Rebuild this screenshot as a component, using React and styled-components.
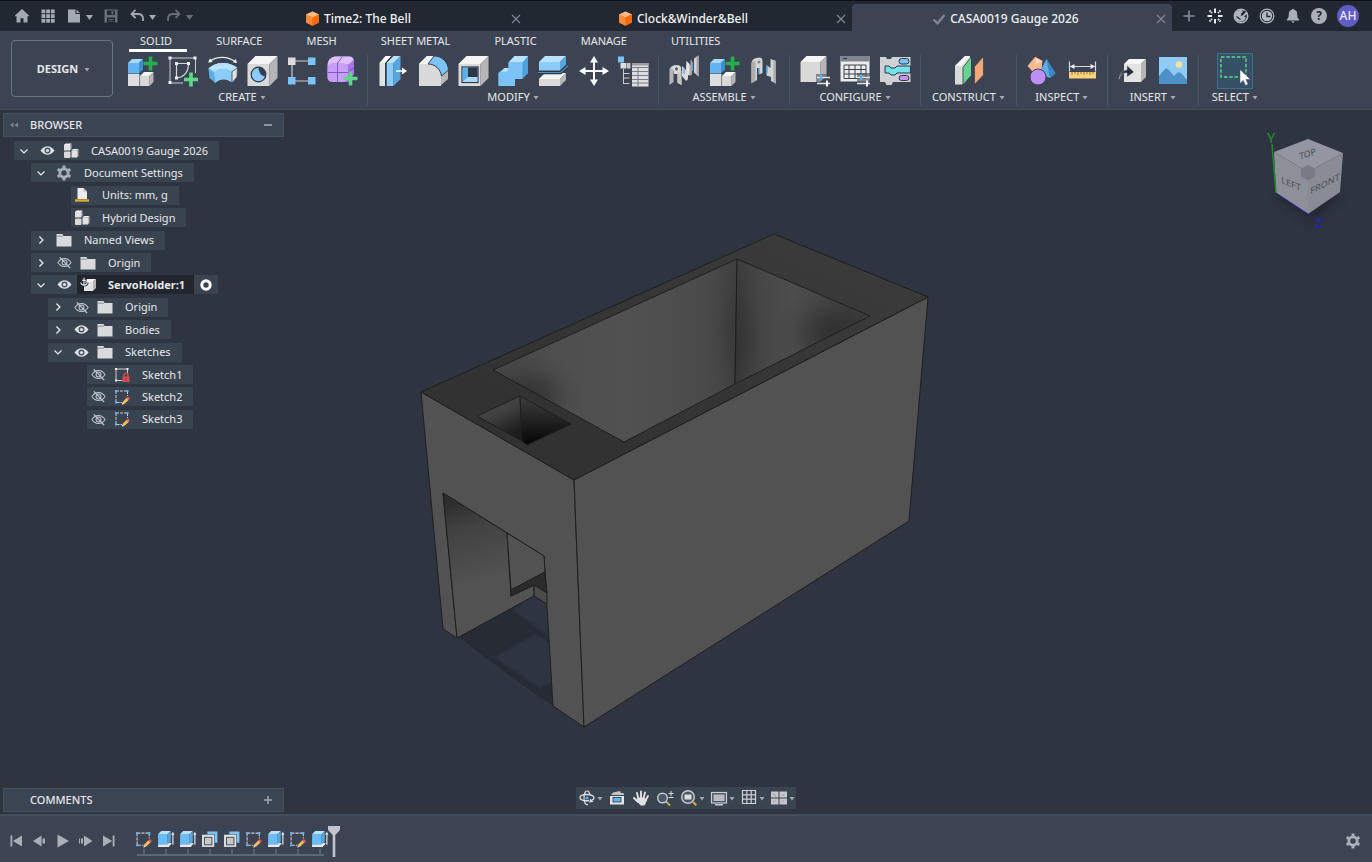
import React from 'react';
import styled, { createGlobalStyle, css } from 'styled-components';

const GlobalStyle = createGlobalStyle`
    *, *::before, *::after {
        box-sizing: border-box;
    }

    body {
        margin: 0;
        background: #2e3440;
        color: #e6e8ec;
        font-family: "Noto Sans", "Open Sans", sans-serif;
        font-size: 11px;
        line-height: 16px;
    }

    button {
        font: inherit;
        color: inherit;
        background: none;
        border: none;
        padding: 0;
        cursor: pointer;
    }

    ul {
        list-style: none;
        margin: 0;
        padding: 0;
    }

    svg {
        display: block;
        flex: none;
    }
`;

const Page = styled.div`
    display: flex;
    flex-direction: column;
    min-height: 100vh;
`;

/* ---- title bar ---- */

const TitleBar = styled.header`
    display: flex;
    height: 31px;
    background: #222831;
    border-top: 1px solid #0c0e13;
    color: #a4a9b3;
`;

const QuickAccess = styled.div`
    flex: 0 0 202px;
    display: flex;
    align-items: center;
    gap: 6px;
    padding-left: 12px;
`;

const TitleButton = styled.button`
    display: flex;
    align-items: center;
    opacity: ${props => (props.$dim ? 0.55 : 1)};
`;

const FileTabs = styled.nav`
    flex: 1;
    display: flex;
    padding-top: 3px;
`;

const FileTab = styled.div`
    flex: ${props => (props.$active ? 64 : 65)};
    display: flex;
    align-items: center;
    padding: 2px 3px 0 6px;
    border-radius: 4px 4px 0 0;
    background: ${props => (props.$active ? '#3c4453' : 'transparent')};
`;

const FileName = styled.a`
    flex: 1;
    display: flex;
    align-items: center;
    justify-content: center;
    gap: 4px;
    color: #f0f1f4;
    font-size: 12px;
    font-weight: 500;
    text-decoration: none;
    white-space: nowrap;
`;

const AccountBar = styled.div`
    flex: 0 0 200px;
    display: flex;
    align-items: center;
    gap: 6px;
    padding-left: 7px;
`;

const Avatar = styled.button`
    width: 22px;
    height: 22px;
    margin-left: 2px;
    border-radius: 50%;
    background: #5f5cc4;
    color: #e9e9fb;
    font-size: 12px;
    font-weight: 500;
`;

/* ---- ribbon ---- */

const Ribbon = styled.section`
    display: flex;
    background: #3c4453;
    padding-bottom: 4px;
    border-bottom: 1px solid #434c5a;
`;

const WorkspacePicker = styled.button`
    display: flex;
    align-items: center;
    justify-content: center;
    gap: 5px;
    width: 102px;
    height: 57px;
    margin: 9px 4px 0 11px;
    padding-left: 4px;
    border: 1px solid #6a7484;
    border-radius: 4px;
    font-weight: 700;
`;

const RibbonTabs = styled.div`
    display: flex;
    gap: 18px;
    padding-left: 12px;
`;

const RibbonTab = styled.button`
    height: 21px;
    padding: 1px 15px 0 11px;
    white-space: nowrap;
    border-bottom: 3px solid ${props => (props.$active ? '#fff' : 'transparent')};
`;

const RibbonGroups = styled.div`
    display: flex;
    padding-top: 3px;
`;

const RibbonGroup = styled.div`
    display: flex;
    flex-direction: column;
    align-items: center;
    gap: 2px;
    padding: 0 ${props => (props.$last ? 11 : 9)}px;
    border-right: 1px solid ${props => (props.$last ? 'transparent' : '#4d5666')};
`;

const ToolRow = styled.div`
    display: flex;
    align-items: center;
    gap: 8px;
    height: 32px;
`;

const ToolButton = styled.button`
    display: flex;
    align-items: center;
    justify-content: center;
    width: 32px;
    height: 32px;
    ${props => props.$active && css`
        width: 36px;
        height: 36px;
        background: #365066;
        border: 1px solid #3b7190;
    `}
`;

const GroupLabel = styled.button`
    display: flex;
    align-items: center;
    gap: 3px;
    padding: 0 2px;
    white-space: nowrap;
`;

/* ---- workspace ---- */

const Workspace = styled.main`
    flex: 1;
    display: grid;
    grid-template-columns: 284px 1fr 284px;
`;

const SidePanels = styled.aside`
    display: flex;
    flex-direction: column;
    justify-content: space-between;
    padding: 3px 0 2px 3px;
`;

const PanelHeader = styled.div`
    display: flex;
    align-items: center;
    height: 24px;
    padding: 0 7px 0 4px;
    background: #3b4452;
    border: 1px solid #465060;
`;

const PanelTitle = styled.h2`
    flex: 1;
    margin: 0;
    padding-left: 10px;
    font-size: 11px;
    font-weight: 500;
`;

const PanelButton = styled.button`
    display: flex;
    align-items: center;
    justify-content: center;
    width: 12px;
    height: 16px;
    margin-right: ${props => (props.$right ? '2px' : 0)};
    color: #a4abb7;
`;

const Tree = styled.ul`
    display: flex;
    flex-direction: column;
    justify-content: space-between;
    align-items: flex-start;
    height: 288px;
    margin: 4px 0 0 11px;
`;

const TreeRow = styled.li`
    display: flex;
    align-items: center;
    gap: 2px;
    height: 19px;
    margin-left: ${props => props.$indent}px;
    background: #3a4350;
`;

const TreeSlot = styled.button`
    display: flex;
    align-items: center;
    justify-content: center;
    width: ${props => (props.$narrow ? 20 : 22)}px;
    height: 19px;
`;

const TreeItem = styled.span`
    display: flex;
    align-items: center;
    gap: 2px;
    height: 19px;
    padding-right: 11px;
    ${props => props.$selected && css`
        padding-right: 9px;
        background: #20252e;
        font-weight: 700;
    `}
`;

const TreeIcon = styled.span`
    display: flex;
    justify-content: center;
    width: 22px;
`;

const TreeLabel = styled.span`
    padding-left: 7px;
    white-space: nowrap;
`;

const Stage = styled.div`
    display: flex;
    flex-direction: column;
    align-items: center;
    min-width: 0;
    padding-bottom: 5px;
`;

const ModelView = styled.svg`
    flex: 1;
    width: 100%;
    min-height: 0;
`;

const NavBar = styled.div`
    display: flex;
    align-items: center;
    gap: 4px;
    height: 22px;
    padding: 0 1px;
    background: #3a4350;
`;

const NavButton = styled.button`
    display: flex;
    align-items: center;
`;

const NavCorner = styled.div`
    display: flex;
    justify-content: flex-end;
    padding: 15px 12px;
`;

/* ---- timeline ---- */

const Timeline = styled.footer`
    display: flex;
    align-items: flex-start;
    height: 48px;
    padding-left: 6px;
    background: #3c4453;
    border-top: 2px solid #434d5b;
    color: #a9aeb8;
`;

const Playback = styled.div`
    display: flex;
    gap: 3px;
    padding: 15px 13px 0 0;
`;

const PlayButton = styled.button`
    display: flex;
    align-items: center;
    justify-content: center;
    width: 20px;
    height: 20px;
`;

const FeatureList = styled.ul`
    display: flex;
    margin-top: 15px;
    padding: 0 1px 2px 2px;
    background: linear-gradient(#5c6777, #5c6777) 6px 100% / calc(100% - 14px) 2px no-repeat;
`;

const Feature = styled.li`
    display: flex;
    flex-direction: column;
    align-items: center;
    width: 22px;

    &::after {
        content: '';
        width: 2px;
        height: 5px;
        background: #566170;
    }
`;

const TimelineMarker = styled.div`
    margin-left: -4px;
    padding-top: 10px;
`;

const SettingsButton = styled.button`
    margin: 17px 11px 0 auto;
`;

/* ---- small glyphs ---- */

const Caret = ({ width = 8, size = 5, color = '#a4a9b3' }) => (
    <svg width={width} height="10" viewBox={`0 0 ${width} 10`} aria-hidden="true">
        <path d={`M${width / 2 - size / 2} 4h${size}l${-size / 2} ${size * 0.7}z`} fill={color} />
    </svg>
);

const Glyph = ({ size = 20, box = 20, children }) => (
    <svg width={size} height={size} viewBox={`0 0 ${box} ${box}`} fill="none" aria-hidden="true">
        {children}
    </svg>
);

const CloseIcon = () => (
    <Glyph size={16} box={16}>
        <path d="M4 4l8 8M12 4l-8 8" stroke="#7f8692" strokeWidth="1.2" />
    </Glyph>
);

const OrangeCube = () => (
    <Glyph size={15} box={15}>
        <path d="M7.5.5l6.5 3v8l-6.5 3.3-6.5-3.3v-8z" fill="#ff7a1c" />
        <path d="M7.5.5l6.5 3-6.5 3-6.5-3z" fill="#ffb98a" />
        <path d="M1 3.5l6.5 3v8.300l-6.500-3.300z" fill="#fb8a3a" />
        <path d="M14 3.5l-6.5 3v8.300l6.500-3.300z" fill="#f26a0c" />
    </Glyph>
);

const CheckIcon = () => (
    <Glyph size={14} box={14}>
        <path d="M1.5 7.5l4 3.8L12.500 3" stroke="#7f8692" strokeWidth="2.4" />
    </Glyph>
);

const titleIcons = {
    home: (
        <path d="M10 3l7 6.500v.8h-1.500V16.500h-4v-4.200h-3v4.200h-4v-6.200H3v-.8z" fill="currentColor" />
    ),
    apps: [3.5, 8.2, 12.9].map(y => [3.5, 8.2, 12.9].map(x => (
        <rect key={`${x}-${y}`} x={x} y={y} width="3.8" height="3.8" fill="currentColor" />
    ))),
    file: <path d="M4 3.500h7.500v4.500h4.500v8.500H4zM12.500 3.500l3.500 3.500h-3.500z" fill="currentColor" />,
    save: (
        <path fillRule="evenodd" fill="currentColor" d="M3.500 3.500h13v13h-13zM6 4.500v4.500h8v-4.500zM6 11.500v5h8v-5zM7.500 13h5v.8h-5zM7.500 14.800h5v.8h-5zM10.500 5.200h1.800v3h-1.800z" />
    ),
    undo: (
        <g stroke="currentColor" strokeWidth="1.8">
            <path d="M5 8h6c3 0 5 1.800 5 5v2" />
            <path d="M8.500 3.800L4.500 8l4 4" />
        </g>
    ),
    redo: (
        <g stroke="currentColor" strokeWidth="1.8">
            <path d="M15 8H9c-3 0-5 1.800-5 5v2" />
            <path d="M11.500 3.800L15.500 8l-4 4" />
        </g>
    ),
    plus: <path d="M10 4.500v11M4.500 10h11" stroke="#858c98" strokeWidth="1.6" />,
    spark: (
        <g stroke="#eceef1" strokeWidth="2">
            <path d="M10 2.500v4.500M10 13v4.500M2.500 10h4.500M13 10h4.500" />
            <path d="M4.500 4.500l2.500 2.500M13 13l2.500 2.500M15.500 4.500l-2.500 2.500M4.500 15.500l2.500-2.500" strokeDasharray="1.600 .700" />
        </g>
    ),
    extensions: (
        <g>
            <circle cx="10" cy="10" r="6.7" stroke="#b0b4bd" strokeWidth="1.6" />
            <path d="M4 7c1.500-2.500 4-3.500 7-3l1 2-2 1.500 1.500 2 4-4 1 2-3.500 3 2 1-1.500 2.500c-2 2-5 2-7 1-2-1.500-3.500-4.500-2.500-8z" fill="#b0b4bd" />
            <path d="M10 9.500l4.500-4.500M5.500 10.500l4 3" stroke="#222831" strokeWidth="1.3" />
        </g>
    ),
    jobs: (
        <g>
            <circle cx="10" cy="10" r="6.8" stroke="#b4b8c0" strokeWidth="1.2" />
            <circle cx="10" cy="10" r="5.2" fill="#b4b8c0" />
            <path d="M10 6.500V10.500h3.500" stroke="#222831" strokeWidth="1.3" />
        </g>
    ),
    bell: (
        <path d="M10 2.500l1.200 1.300c2 .6 3 2 3 4.200 0 3 .5 4.200 2 5.500v1H3.800v-1c1.500-1.300 2-2.500 2-5.500 0-2.200 1-3.600 3-4.200zM8.300 15.300h3.400L10 17.300z" fill="#a9aeb8" />
    ),
};

const HelpMark = styled.span`
    display: flex;
    align-items: center;
    justify-content: center;
    width: 16px;
    height: 16px;
    margin: 0 2px;
    border-radius: 50%;
    background: #a9aeb8;
    color: #222831;
    font-size: 12px;
    font-weight: 700;
`;

/* ---- ribbon drawings, 32 x 32 ---- */

const Plus = ({ x, y, r = 7, color = '#27ae4f' }) => (
    <path d={`M${x} ${y - r}v${r * 2}M${x - r} ${y}h${r * 2}`} stroke={color} strokeWidth="3.6" />
);

const Box = ({ x, y, w, h, d, front = '#d9d9d9', top = '#f5f5f5', side = '#b5b5b5' }) => (
    <g>
        <path d={`M${x} ${y + d}h${w}v${h}h${-w}z`} fill={front} />
        <path d={`M${x} ${y + d}l${d} ${-d}h${w}l${-d} ${d}z`} fill={top} />
        <path d={`M${x + w} ${y + d}l${d} ${-d}v${h}l${-d} ${d}z`} fill={side} />
    </g>
);

const blue = { front: '#63b4f2', top: '#a5d8fb', side: '#3d8fd0' };
const paleBlue = { front: '#8cccf8', top: '#b9e2fc', side: '#58a6de' };

const Sliders = ({ x, y }) => (
    <g strokeWidth="1.4">
        <path d={`M${x} ${y}h13M${x} ${y + 6}h13`} stroke="#e3e3e3" />
        <path d={`M${x + 4} ${y - 3}v6`} stroke="#58b4f0" strokeWidth="2" />
        <path d={`M${x + 10} ${y + 3}v6`} stroke="#f4f4f4" strokeWidth="2" />
    </g>
);

const tools = {
    newComponent: (
        <g>
            <Box x={14} y={17} w={9.5} h={10} d={4} />
            <path d="M2 19h11.500v12H2z" fill="#dedede" />
            <path d="M13.700 20v11" stroke="#7d838d" strokeWidth=".6" />
            <Box x={2} y={4} w={11} h={10.5} d={4} {...blue} />
            <Plus x={24.5} y={8.5} />
        </g>
    ),
    sketch: (
        <g>
            <path d="M4 3v25h13M4 3h25.500v15" stroke="#c9ccd2" strokeWidth="1" />
            <path d="M10.500 8.500v14.500M10.500 8.500h12c0 9-5 14-12 14.500" stroke="#d6d8dc" strokeWidth="1.2" />
            {[[4, 3], [29, 3], [4, 27.5], [10.5, 8.5], [22.5, 8.5], [10.5, 23]].map(([x, y]) => (
                <rect key={`${x}-${y}`} x={x - 1.5} y={y - 1.5} width="3" height="3" fill="#eceef1" />
            ))}
            <Plus x={25} y={24.5} color="#5fd68b" />
        </g>
    ),
    revolve: (
        <g>
            <path d="M2.500 13.500C6 10 11 8 17 8s11 2 14.500 5l-6 14.500c-5-4-11-4-16.500.5z" fill="#8cccf8" />
            <path d="M2.500 13.500C6 10 11 8 17 8s11 2 14.500 5l-5 3.500C21 12.500 13 12.500 8 17z" fill="#b9e2fc" />
            <path d="M2.500 13.500L8 17l1.500 11L3.500 23z" fill="#5eaee6" />
            <path d="M26 16.500l5.500-3.500-.5 9-5 6z" fill="#e2e2e2" stroke="#3a4350" strokeWidth=".8" />
            <path d="M3.500 6.500C11 1 22 1 29.500 7" stroke="#e6e8ec" strokeWidth="1.3" />
            <path d="M2 7.500l2-4 2.500 3.500zM31 8l-4-.8 2.700-3.200z" fill="#fff" />
        </g>
    ),
    hole: (
        <g>
            <Box x={1.5} y={1} w={22} h={22} d={8} />
            <circle cx="12.5" cy="19.5" r="7.3" fill="#8cccf8" stroke="#2c3645" strokeWidth="1.2" />
            <path d="M12.500 12.200a7.300 7.300 0 0 1 7 9.300c-4-.5-7-3.500-7-9.300z" fill="#33404f" />
        </g>
    ),
    pattern: (
        <g>
            <path d="M6 6h20M6 6v20M6 26h20" stroke="#c7cad1" strokeWidth="1.2" />
            <rect x="2" y="2.5" width="7.5" height="7.5" fill="#dcdcdc" />
            <rect x="22" y="2.5" width="7.5" height="7.5" fill="#7cc4f7" />
            <rect x="2" y="22" width="7.5" height="7.5" fill="#7cc4f7" />
            <rect x="22" y="22" width="7.5" height="7.5" fill="#7cc4f7" />
        </g>
    ),
    form: (
        <g>
            <path d="M9 1.500h14q5 0 5 5v13l-6 7.500H6q-4.500 0-4.500-5V9q1-7 7.500-7.500z" fill="#a873e8" />
            <path d="M9 1.500h14q4 0 4.500 3.500l-5 4.500H5q-3 0-3.500 2 .5-9 7.500-10z" fill="#dcc1fb" />
            <rect x="1.5" y="8" width="20.5" height="19" rx="5" fill="#c79ff6" />
            <path d="M11.500 8v19M1.500 17.500h20.500l6-5M11.500 8l5-6.500" stroke="#7d4fc0" strokeWidth=".9" />
            <Plus x={24.5} y={23.5} color="#5fd68b" />
        </g>
    ),
    pressPull: (
        <g>
            <path d="M2.500 8l6-7H14L8 8v23H2.500z" fill="#e2e2e2" />
            <path d="M2.500 8L9 1h5L8 8z" fill="#fff" />
            <Box x={9.5} y={1} w={7} h={23} d={7} {...paleBlue} />
            <path d="M9 31V8l6-7" stroke="#2c3645" strokeWidth="1" />
            <path d="M19 16h7" stroke="#fff" strokeWidth="1.5" />
            <path d="M25 12.500l5 3.500-5 3.500z" fill="#fff" />
        </g>
    ),
    fillet: (
        <g>
            <path d="M2 9L10 1h6c8 0 15 7 15 15v8l-8 7H2z" fill="#b9b9b9" />
            <path d="M2 9L10 1h7L12 9z" fill="#f5f5f5" />
            <path d="M2 9h8c8 0 14 6 14 14v8H2z" fill="#dadada" />
            <path d="M11 9l6-8c8 0 14 6 14.500 14L24.500 21C23.500 14 18 9 11 9z" fill="#7cc4f7" stroke="#2c3645" strokeWidth=".9" />
        </g>
    ),
    shell: (
        <g>
            <Box x={1.5} y={1} w={22} h={22} d={8} />
            <rect x="5" y="12" width="16" height="15.5" fill="#8cccf8" stroke="#2c3645" strokeWidth="1.2" />
            <path d="M5.600 12.600h5.400v10l-5.400 4.900z" fill="#5eaee6" />
            <path d="M11 12.600h9.400v9.600H11z" fill="#2c3645" />
            <path d="M5.600 27l5.400-5h9.400v5z" fill="#a5d8fb" />
        </g>
    ),
    combine: (
        <g>
            <path d="M11.500 7.500l6-6.500H31v17.500L25 24H18v2l-5 5H1.500V18.500L7.500 13h4z" fill="#4f9fdb" />
            <path d="M11.500 7.500l6-6.500H31l-5.500 6.500zM1.500 18.500L7.500 13h4v5.500z" fill="#b9e2fc" />
            <path d="M11.500 7.500h14V24H18v7H1.500V18.500q0-2 2-2h6q2 0 2-2z" fill="#7cc4f7" />
        </g>
    ),
    split: (
        <g>
            <Box x={2} y={18} w={21} h={7} d={6} />
            <path d="M1 18.500h23l7-7" stroke="#2c3645" strokeWidth="1.5" />
            <path d="M1 16.500h22.500L31 9.500v2l-7 6.500H1z" fill="#4d93c8" />
            <path d="M1 16.500h22.500L31 9.500" stroke="#2c3645" strokeWidth="1" />
            <Box x={2} y={1} w={21} h={8.5} d={6} {...paleBlue} />
        </g>
    ),
    move: (
        <g stroke="#fff" strokeWidth="2">
            <path d="M17 5v22M6 16h22" />
            <path d="M17 1l4 6.500h-8zM17 31l4-6.500h-8zM2 16l6.500-4v8zM32 16l-6.500-4v8z" fill="#fff" strokeWidth="0" />
        </g>
    ),
    parameters: (
        <g>
            <rect x="1" y="1.5" width="6" height="6" fill="#7cc4f7" />
            <rect x="3.5" y="8" width="5.5" height="5.5" fill="#dcdcdc" />
            <rect x="9.5" y="8" width="4" height="5.5" fill="#c4c4c4" />
            <path d="M6.500 14v15M6.500 18.500h6M6.500 23h6M6.500 28.500h6" stroke="#c7cad1" strokeWidth="1" />
            <rect x="15" y="8" width="16.5" height="23.5" fill="#dedede" />
            <path d="M15 12.500h16.500M15 16.500h16.500M15 20.500h16.500M15 24.500h16.500M15 28h16.500M21 12v19.500" stroke="#6b7380" strokeWidth=".9" />
            <rect x="15" y="8" width="16.5" height="2.5" fill="#9a9a9a" />
        </g>
    ),
    joint: (
        <g>
            <path d="M1.500 15q0-4 6-5v4q-2 1-2 4v9l-4 3z" fill="#b5b5b5" />
            <path d="M3 13q2-3 6.500-3 3.500.5 3.500 3l.500 17-4-2.500V19H6V16q0-2-3-3z" fill="#d9d9d9" />
            <ellipse cx="8.5" cy="14" rx="1.5" ry="1.8" fill="#5a6472" />
            <path d="M9.500 19l4-3v14l-4-2z" fill="#c4c4c4" />
            <path d="M14 11l4 4v-5l2 1v13l-2 2-4-5z" fill="#dcdcdc" />
            <path d="M18.500 6l4 4.500V5l1.500.500v14l-1.500 1-4-3z" fill="#a9a9a9" />
            <path d="M18.500 6l3 3v12l-3-3z" fill="#e4e4e4" />
            <path d="M26 3.500l4.500-3v21l-4.500-4z" fill="#d2d2d2" />
            <path d="M28.500 1.800l2-1.300v21l-2-1.700z" fill="#a9a9a9" />
            <path d="M16 13v6M24.500 7v9" stroke="#4fa6e6" strokeWidth="1.3" />
        </g>
    ),
    asBuilt: (
        <g>
            <path d="M3.500 8q.5-4 4.500-5l4-.5q2.500.5 2.500 3V18l-3.500 1.500V13H9v12l-5.500 3z" fill="#d4d4d4" />
            <path d="M3.500 8q1-2 4-2V25.500l-4 2.500z" fill="#adadad" />
            <circle cx="11" cy="7" r="1.5" fill="#7c8591" />
            <path d="M18.500 10l4 3V4l5.500 2v22.500l-5-2.500v-4l-4.500-1.500z" fill="#d4d4d4" />
            <path d="M25.500 5l2.500 1v22.500l-2.500-1.200z" fill="#a9a9a9" />
            <path d="M11 13v6M19 11v7" stroke="#4fa6e6" strokeWidth="1.5" />
        </g>
    ),
    configure: (
        <g>
            <Box x={1.5} y={1} w={20} h={20} d={6} />
            <rect x="17" y="19" width="15" height="12" fill="#3c4453" opacity=".55" />
            <Sliders x={18} y={22.5} />
        </g>
    ),
    configTable: (
        <g>
            <rect x="1.5" y="1" width="29" height="25.5" fill="#ececec" />
            <rect x="1.5" y="1" width="29" height="5.5" fill="#7e858f" />
            <path d="M4 3.500h4" stroke="#3a4350" strokeWidth="1.2" />
            <path d="M5 10h22v13.500H5zM5 14.500h22M5 19h22M10 10v13.500M16 10v13.500M22 10v13.500" stroke="#3a4350" strokeWidth="1" />
            <rect x="18" y="18" width="14" height="13" fill="#3c4453" opacity=".6" />
            <Sliders x={18} y={22.5} />
        </g>
    ),
    configRule: (
        <g>
            <path d="M1 2h6l1 2h4l1-2h18.500v25H14l-1.500 3h-5L6 27H1z" fill="#cfd1d4" />
            <rect x="20" y="3.5" width="10" height="5.5" rx="2.7" fill="#7cc4f7" stroke="#2c3645" strokeWidth="1" />
            <path d="M31.500 11H18l-2 2h-4l-2-2H6v7h4l2 2h4l2-2h13.500z" fill="#72e2ec" stroke="#2c3645" strokeWidth="1" />
            <rect x="20" y="20.5" width="10" height="5" rx="2.5" fill="#c39af6" stroke="#2c3645" strokeWidth="1" />
        </g>
    ),
    plane: (
        <g>
            <path d="M3 11L13 1h5v18L10.500 29.500H3z" fill="#dadada" />
            <path d="M3 11L13 1h5l-8 10z" fill="#f5f5f5" />
            <path d="M11 12.500L19.500 1.500v19L11 30z" fill="#68d391" stroke="#2c3645" strokeWidth=".8" />
            <path d="M22.500 11.500L31.500 1.500v18.500L22.500 29.500z" fill="#f5a878" stroke="#3a4350" strokeWidth=".8" />
        </g>
    ),
    measureShapes: (
        <g>
            <path d="M9 2l7.500 4-1 8.500L7 17l-5.500-6z" fill="#f7b98f" />
            <path d="M9 2l7.500 4-7 3.500z" fill="#fbd5ba" />
            <path d="M20.500 4l9 14.500-5.500 4.500L13 18.500z" fill="#5eaee6" />
            <path d="M20.500 4l9 14.500-5.500 4.500z" fill="#3a86c4" />
            <circle cx="12" cy="22" r="8" fill="#bd8ff3" stroke="#3c4453" strokeWidth="1" />
        </g>
    ),
    ruler: (
        <g>
            <path d="M3.500 6.500v10M29.500 6.500v10M4 11.500h25" stroke="#d6d8dc" strokeWidth="1.2" />
            <path d="M4 11.500l4.500-2.500v5zM29 11.500L24.500 9v5z" fill="#eceef1" />
            <rect x="3" y="17" width="27" height="6.5" fill="#f8d27e" />
            <path d="M6 17v3M9 17v2M12 17v3M15 17v2M18 17v3M21 17v2M24 17v3M27 17v2" stroke="#8a6a20" strokeWidth=".9" />
        </g>
    ),
    insertDerive: (
        <g>
            <Box x={7} y={4} w={17} h={18} d={5} front="#e4e4e4" />
            <path d="M2 24c1-7 5-9 8-9v-4.500l7 6.500-7 5v-4c-4 0-6 1-8 6z" fill="#2b3038" stroke="#c7cad1" strokeWidth=".5" />
        </g>
    ),
    picture: (
        <g>
            <rect x="2" y="2" width="28" height="27" fill="#8fcbf5" />
            <circle cx="22" cy="9.5" r="3.3" fill="#f6e2a0" />
            <path d="M2 21l6-7q2-1.500 4 1l5 6 3-3q2-1.500 4 0l6 7v4H2z" fill="#4b93c6" />
        </g>
    ),
    select: (
        <g>
            <rect x="2" y="2" width="25" height="20" stroke="#5fd68b" strokeWidth="1.4" strokeDasharray="3.5 1.8" />
            <path d="M21 14.500v14l3.300-3 2.200 5 2.700-1.200-2.200-4.800h4.500z" fill="#fff" stroke="#3c4453" strokeWidth=".5" />
        </g>
    ),
};

/* ---- browser tree drawings, 16 x 16 ---- */

const treeIcons = {
    open: <path d="M4 6.200l4 4 4-4" stroke="#e6e8ec" strokeWidth="1.5" />,
    closed: <path d="M6.200 4l4 4-4 4" stroke="#e6e8ec" strokeWidth="1.5" />,
    visible: (
        <g>
            <path d="M.5 8C3 4.500 5.500 3.500 8 3.500s5 1 7.500 4.500C13 11.500 10.500 12.500 8 12.500S3 11.500.5 8z" fill="#dfe1e5" />
            <circle cx="8" cy="8" r="3.2" fill="#4a5362" />
            <circle cx="8" cy="8" r="1.7" fill="#dfe1e5" />
        </g>
    ),
    hidden: (
        <g stroke="#c3c7ce" strokeWidth="1.1">
            <path d="M1 8c2-3.200 4.500-4.300 7-4.300S13 4.800 15 8c-2 3.200-4.500 4.300-7 4.300S3 11.200 1 8z" />
            <circle cx="8" cy="8" r="2.6" />
            <path d="M3 2.500l11 11.500" strokeWidth="1.4" />
        </g>
    ),
    component: (
        <g>
            <Box x={1} y={0.5} w={6} h={5.5} d={1.5} front="#e2e2e2" />
            <Box x={8.5} y={6} w={5.5} h={7} d={1.5} front="#e2e2e2" />
            <rect x="1" y="8.5" width="6.5" height="6.5" rx="1" fill="#dadada" />
        </g>
    ),
    gear: (
        <g stroke="#a9afb9">
            <circle cx="8" cy="8" r="4.2" strokeWidth="2.8" />
            <path d="M8 .6v3M8 12.400v3M1.600 4.300l2.600 1.500M11.800 10.200l2.600 1.500M1.600 11.700l2.600-1.500M11.800 5.800l2.600-1.500" strokeWidth="3" />
        </g>
    ),
    units: (
        <g>
            <path d="M3.500 1h6l3.500 3.500V12H3.500z" fill="#e9ebee" />
            <path d="M9.500 1v3.500H13z" fill="#b5b9c0" />
            <path d="M1 13.500h14" stroke="#e0ab35" strokeWidth="2.4" />
        </g>
    ),
    folder: (
        <g>
            <path d="M.5 2h6l1 2h8v10.500H.5z" fill="#d9dadc" />
            <path d="M.5 4.200h6.500" stroke="#6d7480" strokeWidth=".7" />
        </g>
    ),
    anchoredBody: (
        <g>
            <Box x={4} y={2} w={9} h={9} d={3} front="#e2e2e2" />
            <path d="M4 .8v7M1.500 3.200h5M.8 5.500c.5 3.500 6 3.500 6.500 0" stroke="#20252e" strokeWidth="2.6" />
            <path d="M4 .8v7M2 3.200h4M.8 5.500c.5 3.500 6 3.500 6.500 0" stroke="#eceef1" strokeWidth="1.1" />
        </g>
    ),
    lockedSketch: (
        <g>
            <path d="M2 2h11.500M2 2v11.500h6M13.500 2v5" stroke="#c9ccd2" strokeWidth="1" />
            <path d="M1 1h2v2H1zM12.500 1h2v2h-2zM1 12.500h2v2H1z" fill="#eceef1" />
            <rect x="8.5" y="9.5" width="7" height="5.5" fill="#dd4b55" />
            <path d="M10 9.500V8c0-2.300 4-2.300 4 0v1.500" stroke="#dd4b55" strokeWidth="1.3" />
            <path d="M12 11v2.500" stroke="#7a2630" strokeWidth="1" />
        </g>
    ),
    editSketch: (
        <g>
            <path d="M2 2h11.500M2 2v11.500h6M13.500 2v5" stroke="#c9ccd2" strokeWidth="1" strokeDasharray="3 1" />
            <path d="M1 1h2v2H1zM12.500 1h2v2h-2zM1 12.500h2v2H1z" fill="#5bb4f5" />
            <path d="M8 15.500l1-3 4-4 2 2-4 4z" fill="#f5c158" />
            <path d="M12.500 9l1.500-1.500 2 2-1.500 1.500z" fill="#e8575a" />
            <path d="M8 15.500l.6-1.800 1.200 1.200z" fill="#fff" />
        </g>
    ),
    extrude: (
        <g>
            <path d="M1 13l2.500-2H12l2 .5-3 3.500H1z" fill="#e8e8e8" />
            <Box x={1} y={0} w={9} h={10} d={3} {...paleBlue} front="#6bbcf6" />
            <path d="M15 3v10" stroke="#e6e8ec" strokeWidth="1.1" />
            <path d="M13.300 3.500L15 .8l1.500 2.700z" fill="#e6e8ec" />
        </g>
    ),
    faceShell: (
        <g>
            <path d="M6 .5h9.500V11H13V3H6z" fill="#7cc4f7" />
            <rect x="1" y="3.5" width="11.5" height="11.5" fill="#e2e2e2" />
            <rect x="3.3" y="6" width="7" height="7" fill="#c8c8c8" stroke="#4a5362" strokeWidth="1" />
        </g>
    ),
};

/* ---- navigation bar drawings, 20 x 20 ---- */

const navIcons = {
    orbit: (
        <g>
            <path d="M12 12.500c-4 .8-9-.5-9-2.800S6.500 6.500 10 6.500s7 1.300 7 3.300c0 1-.8 1.800-2 2.300" stroke="#dcdee2" strokeWidth="1.3" />
            <path d="M11 16.500c-2 1-4-2-4-6.500s1.500-7 3-7 2.500 1.500 3 4" stroke="#dcdee2" strokeWidth="1.2" />
            <path d="M13.500 10.500l3 3.500-4.500.500z" fill="#dcdee2" />
            <circle cx="10" cy="10" r="1.6" fill="#58b4f0" />
        </g>
    ),
    look: (
        <g>
            <path d="M3 8h14v8.500H3z" fill="#e6e6e6" />
            <path d="M4 7l2-2.500 7-1.500 1 2h2.500l.5 2z" fill="#c4c4c4" />
            <rect x="6" y="9.5" width="8" height="4.5" fill="#5bb4f5" stroke="#2c3645" strokeWidth=".8" />
        </g>
    ),
    pan: (
        <g stroke="#dfe1e5" strokeWidth="1.9" strokeLinecap="round">
            <path d="M7.500 11L6 5M10 10V3.500M12.500 10.500L14 4.500M14.500 12.500L17 8M7 14L3 10" />
            <path d="M6 11l1.500 3 2 3h4l2-5-3-2H7z" fill="#dfe1e5" strokeWidth="1" />
        </g>
    ),
    zoom: (
        <g>
            <circle cx="7.5" cy="10" r="4.8" stroke="#c9ccd2" strokeWidth="1.4" fill="#4b5666" />
            <path d="M11 13.500l1.500 1.500" stroke="#c9ccd2" strokeWidth="1.5" />
            <path d="M12.500 15l2.500 2.500" stroke="#e0ab35" strokeWidth="2" />
            <path d="M16 3v5M13.500 5.500h5M13.500 9.500h5" stroke="#dcdee2" strokeWidth="1" />
        </g>
    ),
    fit: (
        <g>
            <circle cx="9" cy="9" r="6.3" stroke="#c9ccd2" strokeWidth="1.4" fill="#4b5666" />
            <rect x="5.5" y="6.5" width="7" height="5" fill="#dcdee2" />
            <path d="M14 14l3.300 3.300" stroke="#e0ab35" strokeWidth="2" />
        </g>
    ),
    display: (
        <g>
            <rect x="2.5" y="4.5" width="15" height="10.5" fill="#4b5666" stroke="#c9ccd2" strokeWidth="1.2" />
            <rect x="4.5" y="6.5" width="11" height="6.5" fill="#b9bcc2" />
            <path d="M6 16.800h8" stroke="#c9ccd2" strokeWidth="1.5" />
        </g>
    ),
    grid: (
        <path d="M3.500 2.500h13v13h-13zM3.500 6.800h13M3.500 11.200h13M7.800 2.500v13M12.200 2.500v13" stroke="#cdd0d6" strokeWidth="1.2" />
    ),
    viewports: (
        <g fill="#c4c6ca">
            <path d="M2 3.500h7.500v6H2zM10.500 3.500H18v6h-7.500zM2 10.500h7.500v6H2zM10.500 10.500H18v6h-7.500z" />
            <path d="M4 6l3 2M12.500 6l3 2M4 14l3-2M12.500 14l3-2" stroke="#8f959f" strokeWidth=".8" />
        </g>
    ),
};

const playIcons = {
    first: <path d="M4.500 4.500h1.800v11H4.500zM16 4.500v11L6.800 10z" fill="currentColor" />,
    back: <path d="M4 10l8.500-5.500v11zM13.500 7.500h2.500v5h-2.500z" fill="currentColor" />,
    play: <path d="M5.500 3.500L17 10 5.500 16.500z" fill="currentColor" />,
    forward: <path d="M17.500 10L9 4.500v11zM4 7.500h1v5H4zM6 7.500h2v5H6z" fill="currentColor" />,
    last: <path d="M16.500 4.500h-1.800v11h1.800zM5 4.500v11L14.200 10z" fill="currentColor" />,
};

/* ---- data ---- */

const ribbonTabs = ['SOLID', 'SURFACE', 'MESH', 'SHEET METAL', 'PLASTIC', 'MANAGE', 'UTILITIES'];

const ribbonGroups = [
    { label: 'CREATE', tools: ['newComponent', 'sketch', 'revolve', 'hole', 'pattern', 'form'] },
    { label: 'MODIFY', tools: ['pressPull', 'fillet', 'shell', 'combine', 'split', 'move', 'parameters'] },
    { label: 'ASSEMBLE', tools: ['joint', 'newComponent', 'asBuilt'] },
    { label: 'CONFIGURE', tools: ['configure', 'configTable', 'configRule'] },
    { label: 'CONSTRUCT', tools: ['plane'] },
    { label: 'INSPECT', tools: ['measureShapes', 'ruler'] },
    { label: 'INSERT', tools: ['insertDerive', 'picture'] },
    { label: 'SELECT', tools: ['select'] },
];

const treeRows = [
    { label: 'CASA0019 Gauge 2026', indent: 0, toggle: 'open', eye: 'visible', icon: 'component' },
    { label: 'Document Settings', indent: 17, toggle: 'open', icon: 'gear' },
    { label: 'Units: mm, g', indent: 57, icon: 'units' },
    { label: 'Hybrid Design', indent: 57, icon: 'component' },
    { label: 'Named Views', indent: 17, toggle: 'closed', icon: 'folder' },
    { label: 'Origin', indent: 17, toggle: 'closed', eye: 'hidden', icon: 'folder' },
    { label: 'ServoHolder:1', indent: 17, toggle: 'open', eye: 'visible', icon: 'anchoredBody', selected: true },
    { label: 'Origin', indent: 34, toggle: 'closed', eye: 'hidden', icon: 'folder' },
    { label: 'Bodies', indent: 34, toggle: 'closed', eye: 'visible', icon: 'folder' },
    { label: 'Sketches', indent: 34, toggle: 'open', eye: 'visible', icon: 'folder' },
    { label: 'Sketch1', indent: 73, eye: 'hidden', icon: 'lockedSketch' },
    { label: 'Sketch2', indent: 73, eye: 'hidden', icon: 'editSketch' },
    { label: 'Sketch3', indent: 73, eye: 'hidden', icon: 'editSketch' },
];

const navItems = [
    { icon: 'orbit', menu: true },
    { icon: 'look' },
    { icon: 'pan' },
    { icon: 'zoom' },
    { icon: 'fit', menu: true },
    { icon: 'display', menu: true },
    { icon: 'grid', menu: true },
    { icon: 'viewports', menu: true },
];

const features = ['editSketch', 'extrude', 'extrude', 'faceShell', 'faceShell', 'editSketch', 'extrude', 'editSketch', 'extrude'];

/* ---- 3D view ---- */

const Model = () => (
    <ModelView viewBox="284 110 804 677" role="img" aria-label="ServoHolder body">
        <defs>
            <linearGradient id="topFace" x1="0" y1="1" x2="1" y2="0">
                <stop offset="0" stopColor="#2f2f2f" />
                <stop offset="1" stopColor="#3c3c3c" />
            </linearGradient>
            <linearGradient id="pocketLeft" gradientUnits="userSpaceOnUse" x1="493" y1="0" x2="737" y2="0">
                <stop offset="0" stopColor="#464646" />
                <stop offset=".3" stopColor="#4f4f4f" />
                <stop offset=".55" stopColor="#515151" />
                <stop offset=".86" stopColor="#4b4b4b" />
                <stop offset="1" stopColor="#404040" />
            </linearGradient>
            <linearGradient id="pocketRight" gradientUnits="userSpaceOnUse" x1="736" y1="0" x2="850" y2="0">
                <stop offset="0" stopColor="#3c3c3c" />
                <stop offset=".22" stopColor="#464646" />
                <stop offset=".5" stopColor="#4d4d4d" />
                <stop offset="1" stopColor="#414141" />
            </linearGradient>
            <radialGradient id="cornerShade">
                <stop offset="0" stopColor="#1e1e1e" stopOpacity=".55" />
                <stop offset=".35" stopColor="#1e1e1e" stopOpacity=".36" />
                <stop offset=".7" stopColor="#1e1e1e" stopOpacity=".1" />
                <stop offset="1" stopColor="#1e1e1e" stopOpacity="0" />
            </radialGradient>
            <linearGradient id="slotLeft" x1="0" y1="0" x2=".5" y2="1">
                <stop offset="0" stopColor="#4c4c4c" />
                <stop offset=".5" stopColor="#404040" />
                <stop offset="1" stopColor="#1c1c1c" />
            </linearGradient>
            <linearGradient id="slotRight" x1=".2" y1="0" x2=".2" y2="1">
                <stop offset="0" stopColor="#3d3d3d" />
                <stop offset="1" stopColor="#050505" />
            </linearGradient>
            <linearGradient id="archWall" gradientUnits="userSpaceOnUse" x1="460" y1="500" x2="485" y2="580">
                <stop offset="0" stopColor="#2e2e2e" />
                <stop offset=".35" stopColor="#424242" />
                <stop offset="1" stopColor="#525252" />
            </linearGradient>
            <filter id="soften" x="-10%" y="-10%" width="120%" height="120%">
                <feGaussianBlur stdDeviation="1.5" />
            </filter>
            <clipPath id="archFloor">
                <path d="M456 638L534 596 547 604 553 706z" />
            </clipPath>
            <clipPath id="pocketLeftClip">
                <path d="M493 370L737 259 735 384 624 442z" />
            </clipPath>
            <clipPath id="pocketRightClip">
                <path d="M737 259L870 316 735 384z" />
            </clipPath>
        </defs>

        <g clipPath="url(#archFloor)">
            <path d="M450 630L534 590 560 604 560 715z" fill="#262b34" />
            <g filter="url(#soften)" fill="#2e3440">
                <path d="M513 610L534 592 556 600 556 642z" />
                <path d="M494 657L535 634 550 643 556 680 540 688z" />
            </g>
        </g>

        <g stroke="#1f1f1f" strokeWidth="1" strokeLinejoin="round">
            <path d="M421 392L574 480 584 727 553 706 544 556 443 493 457 638 443 629z" fill="#525252" />
            <path d="M574 480L928 297 909 521 584 727z" fill="#525252" />
            <path d="M421 392L774 234 928 297 574 480z" fill="url(#topFace)" />

            <path d="M443 493L507 533 511 596 534 585 534 596 457 638z" fill="url(#archWall)" />
            <path d="M507 533L544 556 545 572 511 590z" fill="#525252" />
            <path d="M511 590L545 572 547 593 534 585 511 596z" fill="#2b2b2b" />
            <path d="M534 585L547 593 547 604 534 596z" fill="#4b4b4b" />

            <path d="M493 370L737 259 735 384 624 442z" fill="url(#pocketLeft)" />
            <path d="M737 259L870 316 735 384z" fill="url(#pocketRight)" />
            <g clipPath="url(#pocketLeftClip)" stroke="none">
                <ellipse cx="530" cy="398" rx="52" ry="44" fill="url(#cornerShade)" />
                <ellipse cx="742" cy="330" rx="36" ry="80" fill="url(#cornerShade)" opacity=".4" />
            </g>
            <g clipPath="url(#pocketRightClip)" stroke="none">
                <ellipse cx="836" cy="334" rx="62" ry="48" fill="url(#cornerShade)" />
                <ellipse cx="734" cy="340" rx="36" ry="80" fill="url(#cornerShade)" opacity=".6" />
            </g>

            <path d="M477 416L520 396 522 441z" fill="url(#slotLeft)" />
            <path d="M520 396L571 424 527 445 522 441z" fill="url(#slotRight)" />
        </g>
    </ModelView>
);

const CubeText = styled.text`
    font-family: "Noto Sans", sans-serif;
    font-size: 9px;
    font-weight: 500;
    fill: #54575e;
    text-anchor: middle;
`;

const AxisText = styled.text`
    font-family: "Noto Sans", sans-serif;
    font-size: 14px;
    font-weight: 500;
    fill: ${props => props.$color};
`;

const ViewCube = () => (
    <svg width="100" height="110" viewBox="1260 125 100 110" role="img" aria-label="View cube">
        <defs>
            <filter id="cubeShadow" x="-30%" y="-30%" width="160%" height="160%">
                <feGaussianBlur stdDeviation="4" />
            </filter>
        </defs>
        <path d="M1276 196L1308 180 1342 196 1310 222z" fill="#1d212a" opacity=".6" filter="url(#cubeShadow)" />
        <path d="M1274 152L1308 139 1343 153 1308 172z" fill="#9395a0" />
        <path d="M1274 152L1308 172 1308 214 1276 193z" fill="#8e9099" />
        <path d="M1343 153L1308 172 1308 214 1340 192z" fill="#8a8c95" />
        <path d="M1308 165l7 3.500v8l-7 4-7-4v-8z" fill="#787b85" />
        <path d="M1272 144L1276 193" stroke="#1f8a2e" strokeWidth="1.5" />
        <path d="M1276 193L1308 214 1314 219" stroke="#23239a" strokeWidth="1" fill="none" />
        <CubeText transform="translate(1308 157) rotate(-18) skewX(-10)">TOP</CubeText>
        <CubeText transform="translate(1291 187) skewY(22)">LEFT</CubeText>
        <CubeText transform="translate(1325 187) skewY(-27)">FRONT</CubeText>
        <AxisText x="1267" y="143" $color="#1f8a2e">Y</AxisText>
        <AxisText x="1315" y="228" $color="#2323b0">Z</AxisText>
    </svg>
);

const BrowserRow = ({ row }) => (
    <TreeRow $indent={row.indent}>
        {row.toggle && (
            <TreeSlot $narrow type="button" aria-label={`Toggle ${row.label}`}>
                <Glyph size={14} box={16}>{treeIcons[row.toggle]}</Glyph>
            </TreeSlot>
        )}
        {row.eye && (
            <TreeSlot type="button" aria-label={`Visibility of ${row.label}`}>
                <Glyph size={15} box={16}>{treeIcons[row.eye]}</Glyph>
            </TreeSlot>
        )}
        <TreeItem $selected={row.selected}>
            <TreeIcon><Glyph size={16} box={16}>{treeIcons[row.icon]}</Glyph></TreeIcon>
            <TreeLabel>{row.label}</TreeLabel>
        </TreeItem>
        {row.selected && (
            <TreeSlot type="button" aria-label="Activate component">
                <Glyph size={14} box={14}>
                    <circle cx="6" cy="7" r="4.2" stroke="#fff" strokeWidth="3" />
                </Glyph>
            </TreeSlot>
        )}
    </TreeRow>
);

const quickAccess = [
    { icon: 'home', label: 'Home' },
    { icon: 'apps', label: 'Show data panel' },
    { icon: 'file', label: 'File', menu: true },
    { icon: 'save', label: 'Save', dim: true },
    { icon: 'undo', label: 'Undo', menu: true },
    { icon: 'redo', label: 'Redo', menu: true, dim: true },
];

const App = () => (
    <Page>
        <GlobalStyle />
        <TitleBar>
            <QuickAccess>
                {quickAccess.map(item => (
                    <TitleButton key={item.icon} type="button" aria-label={item.label} $dim={item.dim}>
                        <Glyph>{titleIcons[item.icon]}</Glyph>
                        {item.menu && <Caret width={11} size={7} />}
                    </TitleButton>
                ))}
            </QuickAccess>
            <FileTabs>
                <FileTab>
                    <FileName href="#bell"><OrangeCube />Time2: The Bell</FileName>
                    <TitleButton type="button" aria-label="Close Time2: The Bell"><CloseIcon /></TitleButton>
                </FileTab>
                <FileTab>
                    <FileName href="#clock"><OrangeCube />Clock&amp;Winder&amp;Bell</FileName>
                    <TitleButton type="button" aria-label="Close Clock&Winder&Bell"><CloseIcon /></TitleButton>
                </FileTab>
                <FileTab $active>
                    <FileName href="#gauge"><CheckIcon />CASA0019 Gauge 2026</FileName>
                    <TitleButton type="button" aria-label="Close CASA0019 Gauge 2026"><CloseIcon /></TitleButton>
                </FileTab>
            </FileTabs>
            <AccountBar>
                {['plus', 'spark', 'extensions', 'jobs', 'bell'].map(name => (
                    <TitleButton key={name} type="button" aria-label={name}>
                        <Glyph>{titleIcons[name]}</Glyph>
                    </TitleButton>
                ))}
                <TitleButton type="button" aria-label="Help"><HelpMark>?</HelpMark></TitleButton>
                <Avatar type="button">AH</Avatar>
            </AccountBar>
        </TitleBar>

        <Ribbon>
            <WorkspacePicker type="button">DESIGN <Caret /></WorkspacePicker>
            <div>
                <RibbonTabs>
                    {ribbonTabs.map((tab, i) => (
                        <RibbonTab key={tab} type="button" $active={i === 0}>{tab}</RibbonTab>
                    ))}
                </RibbonTabs>
                <RibbonGroups>
                    {ribbonGroups.map(group => (
                        <RibbonGroup key={group.label} $last={group.label === 'SELECT'}>
                            <ToolRow>
                                {group.tools.map(name => (
                                    <ToolButton key={name} type="button" aria-label={name} $active={name === 'select'}>
                                        <Glyph size={32} box={32}>{tools[name]}</Glyph>
                                    </ToolButton>
                                ))}
                            </ToolRow>
                            <GroupLabel type="button">{group.label}<Caret width={6} /></GroupLabel>
                        </RibbonGroup>
                    ))}
                </RibbonGroups>
            </div>
        </Ribbon>

        <Workspace>
            <SidePanels>
                <div>
                    <PanelHeader>
                        <PanelButton type="button" aria-label="Collapse browser">
                            <Glyph size={12} box={12}>
                                <path d="M5.500 3.500v5L2 6zM10 3.500v5L6.500 6z" fill="#7b8492" />
                            </Glyph>
                        </PanelButton>
                        <PanelTitle>BROWSER</PanelTitle>
                        <PanelButton type="button" aria-label="Minimise browser" $right>
                            <Glyph size={12} box={12}>
                                <path d="M2 6h8" stroke="currentColor" strokeWidth="1.6" />
                            </Glyph>
                        </PanelButton>
                    </PanelHeader>
                    <Tree>
                        {treeRows.map((row, i) => <BrowserRow key={i} row={row} />)}
                    </Tree>
                </div>
                <PanelHeader>
                    <PanelButton as="span" />
                    <PanelTitle>COMMENTS</PanelTitle>
                    <PanelButton type="button" aria-label="Add comment" $right>
                        <Glyph size={12} box={12}>
                            <path d="M6 2v8M2 6h8" stroke="currentColor" strokeWidth="1.5" />
                        </Glyph>
                    </PanelButton>
                </PanelHeader>
            </SidePanels>

            <Stage>
                <Model />
                <NavBar>
                    {navItems.map(item => (
                        <NavButton key={item.icon} type="button" aria-label={item.icon}>
                            <Glyph>{navIcons[item.icon]}</Glyph>
                            {item.menu && <Caret width={6} />}
                        </NavButton>
                    ))}
                </NavBar>
            </Stage>

            <NavCorner>
                <ViewCube />
            </NavCorner>
        </Workspace>

        <Timeline>
            <Playback>
                {Object.keys(playIcons).map(name => (
                    <PlayButton key={name} type="button" aria-label={name}>
                        <Glyph>{playIcons[name]}</Glyph>
                    </PlayButton>
                ))}
            </Playback>
            <FeatureList>
                {features.map((name, i) => (
                    <Feature key={i}>
                        <Glyph size={18} box={17}>{treeIcons[name]}</Glyph>
                    </Feature>
                ))}
            </FeatureList>
            <TimelineMarker>
                <svg width="12" height="32" viewBox="0 0 12 32" aria-hidden="true">
                    <path d="M0 0h12v4L7.300 9v22H4.700V9L0 4z" fill="#c3c6cc" />
                </svg>
            </TimelineMarker>
            <SettingsButton type="button" aria-label="Timeline settings">
                <Glyph size={16} box={16}>{treeIcons.gear}</Glyph>
            </SettingsButton>
        </Timeline>
    </Page>
);

export default App;
